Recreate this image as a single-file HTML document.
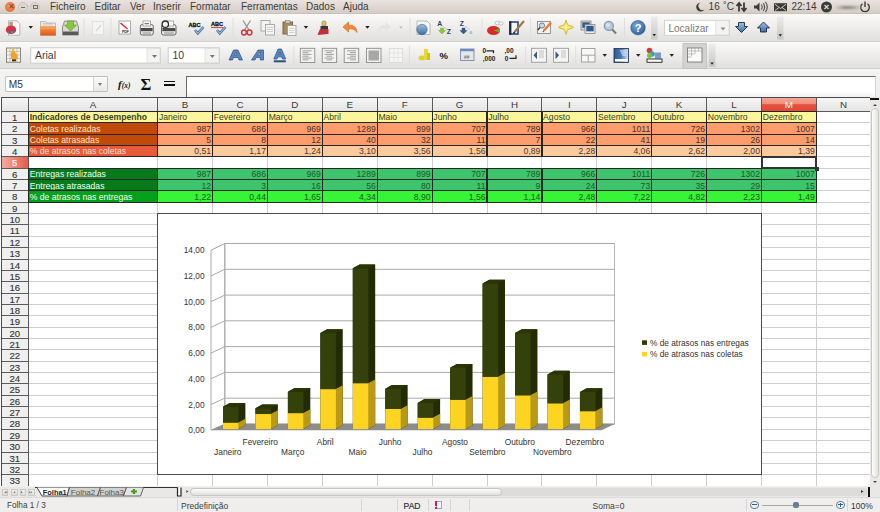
<!DOCTYPE html><html><head><meta charset="utf-8"><style>
*{margin:0;padding:0;box-sizing:border-box}
html,body{width:880px;height:512px;overflow:hidden;background:#f2f1f0;font-family:"Liberation Sans",sans-serif;position:relative}
.a{position:absolute}
.t{position:absolute;white-space:nowrap;line-height:1}
#menubar{left:0;top:0;width:880px;height:14px;background:linear-gradient(#e9e3e1,#e0d8d3 50%,#d5cdc4);border-bottom:1px solid #cbc3ba}
.mi{position:absolute;top:1px;font-size:10px;color:#3c3b37;line-height:12px}
.tb{left:0;width:880px;background:linear-gradient(#fafaf9,#eeedec 50%,#e0e0de);}
.sep{position:absolute;width:1px;background:#d4d3d0;border-right:1px solid #fafafa}
.ic{position:absolute}
.dd{position:absolute;width:0;height:0;border-left:2.5px solid transparent;border-right:2.5px solid transparent;border-top:3px solid #222}
.cell{position:absolute;overflow:hidden;white-space:nowrap;font-size:8.65px;line-height:12.6px}
.rh{position:absolute;left:1px;width:27.5px;text-align:center;font-size:9.6px;color:#333;line-height:11.5px;-webkit-text-stroke:0.12px #333}
.ch{position:absolute;top:98px;height:13.4px;text-align:center;font-size:9.8px;color:#3a3a3a;line-height:13.4px}
</style></head><body>

<div class="a" id="menubar"></div>
<div class="a" style="left:5px;top:1.5px;width:10px;height:10px;border-radius:50%;background:radial-gradient(circle at 50% 40%,#f49a66,#e0602a);"></div>
<div class="t" style="left:7.5px;top:2.5px;font-size:8px;color:#7a3a20">&#x2715;</div>
<div class="a" style="left:18px;top:2px;width:10px;height:10px;border-radius:50%;background:#dcd5d0;border:1px solid #cbc4bd"></div>
<div class="a" style="left:21px;top:6.5px;width:4px;height:1px;background:#706c66"></div>
<div class="a" style="left:30px;top:2px;width:10px;height:10px;border-radius:50%;background:#dcd5d0;border:1px solid #cbc4bd"></div>
<div class="a" style="left:32.5px;top:5px;width:5px;height:4px;border:1px solid #706c66"></div>
<div class="mi" style="left:50px">Ficheiro</div>
<div class="mi" style="left:94.5px">Editar</div>
<div class="mi" style="left:130px">Ver</div>
<div class="mi" style="left:153px">Inserir</div>
<div class="mi" style="left:190px">Formatar</div>
<div class="mi" style="left:241px">Ferramentas</div>
<div class="mi" style="left:306px">Dados</div>
<div class="mi" style="left:343px">Ajuda</div>
<svg class="a" style="left:690px;top:0" width="190" height="14"><path d="M10.5 2.5 A4.5 4.5 0 1 0 14.5 9.5 A3.8 3.8 0 0 1 10.5 2.5 Z" fill="#3c3b37"/><path d="M49 11.5 V3.5 M46.5 6 L49 3 L51.5 6 M54 2.5 V10.5 M51.5 8 L54 11 L56.5 8" fill="none" stroke="#3c3b37" stroke-width="1.8"/><path d="M64 5.5 h2.5 l3 -3 v9 l-3 -3 h-2.5 z" fill="#3c3b37"/><path d="M71.5 4.5 Q73 7 71.5 9.5 M73.5 3 Q76 7 73.5 11 M75.5 1.8 Q79 7 75.5 12.2" fill="none" stroke="#3c3b37" stroke-width="1"/><rect x="84" y="3.2" width="13" height="8" fill="#3c3b37"/><path d="M85 4.2 L90.5 8.5 L96 4.2 M85 10.5 L89 7.5 M96 10.5 L92 7.5" fill="none" stroke="#dcd8d0" stroke-width="0.9"/><circle cx="136.5" cy="7" r="5.5" fill="#3c3b37"/><path d="M134.5 5 L138.5 9 M138.5 5 L134.5 9" stroke="#dcd8d0" stroke-width="1.3"/><path d="M177.5 3.8 A4.3 4.3 0 1 1 172.5 3.8" fill="none" stroke="#3c3b37" stroke-width="1.4"/><path d="M175 1.5 V7" stroke="#3c3b37" stroke-width="1.4"/></svg>
<div class="mi" style="left:708.4px;letter-spacing:0.3px">16 &#x02DA;C</div>
<div class="mi" style="left:791.5px">22:14</div>
<div class="a" style="left:836px;top:5.5px;width:24px;height:3px;background:linear-gradient(90deg,#cfcbc3,#85817b 40%,#9a968f 70%,#cfcbc3);filter:blur(0.8px)"></div>
<div class="a tb" style="top:14px;height:28px;border-bottom:1px solid #d2d1ce"></div>
<div class="a tb" style="top:42px;height:27px;border-bottom:1px solid #cfcecb"></div>
<div class="a" style="left:0;top:69px;width:880px;height:28px;background:linear-gradient(#f3f3f2,#eeeeed)"></div>
<svg class="a" style="left:0;top:0" width="880" height="100">
<defs>
<linearGradient id="gOr" x1="0" y1="0" x2="0" y2="1"><stop offset="0" stop-color="#f7a04a"/><stop offset="1" stop-color="#e0541a"/></linearGradient>
<linearGradient id="gBl" x1="0" y1="0" x2="0" y2="1"><stop offset="0" stop-color="#9fc0e0"/><stop offset="1" stop-color="#3c6fa6"/></linearGradient>
<linearGradient id="gChev" x1="0" y1="0" x2="0" y2="1"><stop offset="0" stop-color="#ececea"/><stop offset="1" stop-color="#c6c6c4"/></linearGradient>
<radialGradient id="gHelp" cx="0.4" cy="0.35" r="0.7"><stop offset="0" stop-color="#78a8d8"/><stop offset="1" stop-color="#2c5f98"/></radialGradient>
</defs>
<!-- ===== toolbar 1 ===== -->
<!-- new doc -->
<path d="M8.5 20.8 H17 L19.8 23.6 V35.2 H8.5 Z" fill="#fbfbfb" stroke="#a8a8a6" stroke-width="0.8"/>
<rect x="9.3" y="21.8" width="3.6" height="4" fill="#b89a8a"/>
<ellipse cx="11" cy="29.8" rx="5.2" ry="4.3" fill="#d8323a"/>
<path d="M7 31.5 Q11 35.5 15.8 31 Q13 30 11.5 31.5 Q9 30 7 31.5 Z" fill="#6a5aa8"/>
<path d="M10.5 32 Q12 30.5 13.5 32 L12 33.5 Z" fill="#5aa05a"/>
<path d="M28.5 26 h4.5 l-2.25 2.8 z" fill="#222"/>
<!-- open folder -->
<path d="M40.5 21.5 h5 l1.5 1.5 h8.5 v12.3 h-15 z" fill="#ecebe8" stroke="#a9a69f" stroke-width="0.7"/>
<path d="M42.5 23.5 h10 M42.5 25 h10" stroke="#b8b6b0" stroke-width="0.6"/>
<path d="M40.3 26.2 h15.5 v9.3 h-15.5 z" fill="url(#gOr)"/>
<path d="M41 28.3 h14" stroke="#fbb070" stroke-width="0.8"/>
<!-- save -->
<path d="M62.5 27 L64.5 21 H76.5 L78.5 27 V35 H62.5 Z" fill="#d8d8d6" stroke="#7a7a78" stroke-width="0.8"/>
<rect x="63" y="31.5" width="15" height="3.5" fill="#5a5a58"/>
<path d="M67.5 21 h6 v4 h3 l-6 6 l-6 -6 h3 z" fill="#8cc63a" stroke="#5c9a1a" stroke-width="0.6"/>
<line x1="84" y1="18" x2="84" y2="38" stroke="#dfdedb" stroke-width="1"/>
<!-- disabled edit -->
<rect x="92.5" y="21.5" width="11" height="13" fill="#f5f5f4" stroke="#dcdcda" stroke-width="0.8"/>
<line x1="96" y1="31" x2="101" y2="25" stroke="#d8d8d6" stroke-width="1.2"/>
<line x1="111" y1="18" x2="111" y2="38" stroke="#dfdedb" stroke-width="1"/>
<!-- pdf -->
<rect x="119" y="21" width="11.5" height="13" fill="#fdfdfd" stroke="#9a9a98" stroke-width="0.8"/>
<path d="M120.5 23 L127.5 29" stroke="#d4303a" stroke-width="1.6"/>
<text x="122" y="33" font-family="Liberation Sans" font-size="3.5" font-weight="bold" fill="#222">PDF</text>
<!-- printer -->
<rect x="140.3" y="24.5" width="13" height="10.5" rx="2" fill="#ececea" stroke="#5a5a58" stroke-width="0.9"/>
<rect x="143" y="21" width="7.5" height="5" fill="#fff" stroke="#8a8a88" stroke-width="0.7"/>
<rect x="144.5" y="23" width="4.5" height="1.3" fill="#7a7a78"/>
<rect x="141" y="28" width="11.5" height="3.2" fill="#4a4a48"/>
<rect x="142.5" y="32.5" width="8.5" height="1" fill="#8a8a88"/>
<!-- print preview -->
<rect x="161.5" y="24.5" width="14.5" height="10.5" rx="2" fill="#ececea" stroke="#5a5a58" stroke-width="0.9"/>
<rect x="166" y="21" width="7.5" height="5" fill="#fff" stroke="#8a8a88" stroke-width="0.7"/>
<rect x="162.3" y="28" width="13" height="3.2" fill="#4a4a48"/>
<rect x="164" y="32.5" width="10" height="1" fill="#8a8a88"/>
<circle cx="165.3" cy="24.2" r="3.2" fill="#f4f4f4" stroke="#2a2a28" stroke-width="1.3"/>
<!-- spell -->
<text x="188.6" y="26.5" font-family="Liberation Sans" font-size="5.6" font-weight="bold" fill="#111" textLength="12" stroke="#111" stroke-width="0.3">ABC</text>
<path d="M195 30 L197.8 33.3 L203.5 27" fill="none" stroke="#3a5a88" stroke-width="2.6"/>
<path d="M195 30 L197.8 33.3 L203.5 27" fill="none" stroke="#9ab8dc" stroke-width="1.2"/>
<text x="211" y="25.8" font-family="Liberation Sans" font-size="5.6" font-weight="bold" fill="#111" textLength="12" stroke="#111" stroke-width="0.3">ABC</text>
<line x1="211" y1="27.6" x2="223" y2="27.6" stroke="#d43a3a" stroke-width="1"/>
<path d="M217 30 L219.8 33.3 L225.5 27" fill="none" stroke="#3a5a88" stroke-width="2.6"/>
<path d="M217 30 L219.8 33.3 L225.5 27" fill="none" stroke="#9ab8dc" stroke-width="1.2"/>
<line x1="233" y1="18" x2="233" y2="38" stroke="#dfdedb" stroke-width="1"/>
<!-- scissors -->
<path d="M243 20.5 L249 30 M250.5 20.5 L244.5 30" stroke="#9a9a98" stroke-width="1.4"/>
<circle cx="244" cy="32.5" r="2.4" fill="none" stroke="#d2383c" stroke-width="1.5"/>
<circle cx="249.5" cy="32.5" r="2.4" fill="none" stroke="#d2383c" stroke-width="1.5"/>
<!-- copy -->
<rect x="261" y="20.5" width="9" height="10.5" fill="#f4f4f3" stroke="#9a9a98" stroke-width="0.8"/>
<rect x="265.5" y="24.5" width="9" height="10.5" fill="#f4f4f3" stroke="#9a9a98" stroke-width="0.8"/>
<path d="M267 27.5 h6 M267 29.5 h6 M267 31.5 h6" stroke="#b8b8b6" stroke-width="0.6"/>
<!-- paste -->
<rect x="283" y="22" width="9.5" height="12" fill="#a68a60" stroke="#7a6440"/>
<rect x="285.5" y="20.5" width="4.5" height="2.5" fill="#d8d2c4" stroke="#777" stroke-width="0.5"/>
<rect x="287.5" y="25.5" width="8.5" height="10" fill="#f8f8f7" stroke="#9a9a98" stroke-width="0.8"/>
<path d="M289 28.5 h5.5 M289 30.5 h5.5 M289 32.5 h5.5" stroke="#b8b8b6" stroke-width="0.6"/>
<path d="M303.7 26 h4.5 l-2.25 2.8 z" fill="#222"/>
<!-- clone brush -->
<rect x="322" y="21" width="4" height="5" rx="1.5" fill="#d8c070" stroke="#8a7a40" stroke-width="0.6"/>
<rect x="320.5" y="26" width="7.5" height="3" fill="#3a3a3a"/>
<path d="M320 29 h8.5 v5 l-11 1 z" fill="#c0303a"/>
<!-- undo -->
<path d="M343 27 L348.5 22 V25 Q357 25 357 32.5 Q354 28 348.5 29 V32 Z" fill="#f08a3a" stroke="#d06a20" stroke-width="0.6"/>
<path d="M365.2 26 h4.5 l-2.25 2.8 z" fill="#222"/>
<!-- redo disabled -->
<path d="M391 27 L385.5 22 V25 Q377 25 377 32.5 Q380 28 385.5 29 V32 Z" fill="#e4e4e2"/>
<path d="M399.2 26.5 h3.5 l-1.75 2.2 z" fill="#b8b8b6"/>
<line x1="410" y1="18" x2="410" y2="38" stroke="#dfdedb" stroke-width="1"/>
<!-- hyperlink -->
<path d="M417 21 h10 l3 3 v10.5 h-13 z" fill="#f8f8f7" stroke="#a9a9a7" stroke-width="0.8"/>
<circle cx="422" cy="29.5" r="5.2" fill="url(#gBl)" stroke="#3a5f8a" stroke-width="0.6"/>
<!-- sort asc -->
<text x="437.3" y="26.3" font-family="Liberation Sans" font-size="6.8" font-weight="bold" fill="#2a3e66">A</text>
<path d="M440.5 28 h3 v2.5 h2 l-3.5 3.5 l-3.5 -3.5 h2 z" fill="#8ac83a" stroke="#6aa02a" stroke-width="0.4"/>
<text x="446.8" y="34" font-family="Liberation Sans" font-size="6.8" font-weight="bold" fill="#2a3e66">Z</text>
<line x1="442.5" y1="26" x2="447" y2="29.5" stroke="#8aa0b8" stroke-width="0.5"/>
<!-- sort desc -->
<text x="459.8" y="26.3" font-family="Liberation Sans" font-size="6.8" font-weight="bold" fill="#2a3e66">Z</text>
<path d="M462 28 h3 v2.5 h2 l-3.5 3.5 l-3.5 -3.5 h2 z" fill="#3a5a8a" stroke="#2a3e66" stroke-width="0.4"/>
<text x="469" y="34" font-family="Liberation Sans" font-size="6" fill="#a0a8b0">a</text>
<line x1="465" y1="26" x2="469.5" y2="29.5" stroke="#8aa0b8" stroke-width="0.5"/>
<line x1="482" y1="18" x2="482" y2="38" stroke="#e2e1de" stroke-width="1"/>
<!-- chart -->
<ellipse cx="493.5" cy="30.5" rx="6.5" ry="4.5" fill="#d82a2a"/>
<path d="M493.5 30.5 L500 28.5 L499.5 32.5 Z" fill="#6ab02a"/>
<ellipse cx="497.5" cy="23" rx="2.5" ry="1.8" fill="#f4f4f4" stroke="#b0a0a8" stroke-width="0.6"/>
<ellipse cx="501" cy="23.5" rx="2.2" ry="1.6" fill="#f4f4f4" stroke="#b0a0a8" stroke-width="0.6"/>
<!-- draw -->
<rect x="510" y="22" width="8" height="12" fill="#f6f8fb" stroke="#2a4a7a" stroke-width="1.6"/>
<rect x="509.2" y="21.2" width="2.2" height="13.6" fill="#1a2a4a"/>
<path d="M524 21 L514.5 32" stroke="#a07848" stroke-width="2.2"/>
<path d="M514.5 32 L513.5 33.5" stroke="#222" stroke-width="1.5"/>
<line x1="530.5" y1="18" x2="530.5" y2="38" stroke="#e2e1de" stroke-width="1"/>
<!-- navigator -->
<rect x="537.5" y="21.5" width="13" height="12" fill="#f2f2f0" stroke="#8a8a88" stroke-width="0.9"/>
<circle cx="542" cy="25.5" r="2.6" fill="#c8dcf0" stroke="#4a6a8a" stroke-width="0.8"/>
<path d="M540 27.5 L537.8 30" stroke="#333" stroke-width="1.3"/>
<path d="M551 22.5 L544 30.5" stroke="#f07a28" stroke-width="2.4"/>
<path d="M544 30.5 L543 32" stroke="#555" stroke-width="1.3"/>
<!-- gallery star -->
<path d="M566 20 Q567 25.5 569 25.5 Q571 25.5 573.5 27.2 Q571 29 569 29 Q567 29 566 34.5 Q565 29 563 29 Q561 29 558.5 27.2 Q561 25.5 563 25.5 Q565 25.5 566 20 Z" fill="#f2e468" stroke="#cbb428" stroke-width="0.9"/>
<path d="M562 27.2 h8 M566 23.5 v7.5" stroke="#fff8b0" stroke-width="0.8"/>
<!-- data sources -->
<rect x="581" y="21" width="10" height="9" fill="#d4d8dc" stroke="#7a7a7a" stroke-width="0.7"/>
<rect x="582.3" y="22.3" width="7.4" height="5.5" fill="#3a5a80"/>
<rect x="585" y="24.5" width="10" height="9" fill="#e8eaec" stroke="#7a7a7a" stroke-width="0.7"/>
<rect x="586.3" y="25.8" width="7.4" height="5.5" fill="#2a5a90"/>
<!-- zoom -->
<circle cx="608.8" cy="25.9" r="4.5" fill="#b8cce0" stroke="#8898a8" stroke-width="1.3"/>
<circle cx="608" cy="25" r="1.8" fill="#dde8f2"/>
<line x1="612" y1="29.3" x2="616" y2="33.5" stroke="#7a7a78" stroke-width="2"/>
<line x1="624.5" y1="18" x2="624.5" y2="38" stroke="#dfdedb" stroke-width="1"/>
<!-- help -->
<circle cx="638" cy="27.7" r="7.3" fill="url(#gHelp)" stroke="#2a5080" stroke-width="0.5"/>
<text x="638" y="32" text-anchor="middle" font-family="Liberation Sans" font-size="11" font-weight="bold" fill="#fff">?</text>
<!-- chevron -->
<rect x="651" y="16.5" width="6.5" height="23" fill="url(#gChev)"/>
<path d="M652.5 34 h3.5 l-1.75 2.2 z" fill="#222"/>
<!-- localizar -->
<rect x="664.5" y="20.3" width="65" height="15" fill="#fff" stroke="#cfcecb" stroke-width="0.9"/>
<rect x="715.5" y="20.8" width="13.5" height="14" fill="#f3f3f2" stroke="#dcdcda" stroke-width="0.6"/>
<path d="M720.5 27.5 h5 l-2.5 3 z" fill="#8a8a88"/>
<text x="668.5" y="31.5" font-family="Liberation Sans" font-size="10" fill="#777">Localizar</text>
<!-- find down/up -->
<path d="M738.5 22.5 h6 v4 h3 l-6 6 l-6 -6 h3 z" fill="url(#gBl)" stroke="#1a2a40" stroke-width="0.9"/>
<path d="M760.5 32 h6 v-4 h3 l-6 -6 l-6 6 h3 z" fill="url(#gBl)" stroke="#1a2a40" stroke-width="0.9"/>
<rect x="777" y="16.5" width="6.5" height="23" fill="url(#gChev)"/>
<path d="M778.5 34.3 h3.5 l-1.75 2.2 z" fill="#222"/>

<!-- ===== toolbar 2 ===== -->
<rect x="6.5" y="48" width="14" height="14.3" fill="#f6f4ec" stroke="#7a7a72" stroke-width="0.9"/>
<path d="M6.5 51.5 h14 M6.5 55 h14 M6.5 58.5 h14 M10 48 v14.3 M13.5 48 v14.3 M17 48 v14.3" stroke="#aaa89a" stroke-width="0.6"/>
<path d="M11 54 Q11 50.5 13 49.5 Q15 50.5 15.5 53 Q18 54.5 17.5 58 Q16 61 13.5 60.5 Q10.5 60 11 54 Z" fill="#f2a030"/>
<rect x="12.2" y="48.3" width="1.8" height="4" fill="#e8c020"/>
<rect x="12" y="59.5" width="4" height="1.8" fill="#3a2a1a"/>
<!-- font name -->
<rect x="30.8" y="47.8" width="129.5" height="15.3" fill="#fff" stroke="#c8c7c3" stroke-width="0.9"/>
<rect x="147" y="48.3" width="13" height="14.3" fill="#f3f3f2" stroke="#d8d8d6" stroke-width="0.6"/>
<path d="M152 55 h5 l-2.5 3 z" fill="#777"/>
<text x="35" y="59.3" font-family="Liberation Sans" font-size="10.5" fill="#3a3a3a">Arial</text>
<!-- size -->
<rect x="168.2" y="47.8" width="51" height="15.3" fill="#fff" stroke="#c8c7c3" stroke-width="0.9"/>
<rect x="205" y="48.3" width="13.8" height="14.3" fill="#f3f3f2" stroke="#d8d8d6" stroke-width="0.6"/>
<path d="M209.8 55 h5 l-2.5 3 z" fill="#777"/>
<text x="172.5" y="59.3" font-family="Liberation Sans" font-size="10.5" fill="#3a3a3a">10</text>
<!-- bold/italic/underline A -->
<path d="M229 60 L233.5 50 H238 L242.5 60 H239 L238 57.5 H233.5 L232.5 60 Z M234.5 55 H237 L235.8 52 Z" fill="#5a86c0" stroke="#2c4f80" stroke-width="0.7" fill-rule="evenodd"/>
<path d="M251.5 60 L258 50 H263.5 L263.5 60 H260.3 L260.2 57.5 H256.3 L255 60 Z M257.5 55 H260.2 L260.3 52 Z" fill="#5a86c0" stroke="#2c4f80" stroke-width="0.7" fill-rule="evenodd"/>
<path d="M273.8 59 L278 49 H281.5 L285.7 59 H282.5 L281.6 56.8 H277.9 L277 59 Z M278.8 54.5 H280.7 L279.8 52 Z" fill="#5a86c0" stroke="#2c4f80" stroke-width="0.7" fill-rule="evenodd"/>
<rect x="273.8" y="60.3" width="12" height="2" fill="#2c4f80"/>
<line x1="293.8" y1="46" x2="293.8" y2="66" stroke="#dfdedb" stroke-width="1"/>
<!-- align -->
<g fill="#f2f2f1" stroke="#8a8a88" stroke-width="0.9">
<rect x="300.3" y="48.3" width="14.5" height="14.2"/>
<rect x="322.2" y="48.3" width="14.5" height="14.2"/>
<rect x="344.2" y="48.3" width="14.5" height="14.2"/>
<rect x="366.5" y="48.3" width="14.5" height="14.2"/>
</g>
<path d="M302.5 50.8 h9 M302.5 52.6 h6 M302.5 54.4 h9 M302.5 56.2 h6 M302.5 58 h9 M302.5 59.8 h6" stroke="#9a9a98" stroke-width="0.9"/>
<path d="M324.5 50.8 h9.5 M326.5 52.6 h5.5 M324.5 54.4 h9.5 M326.5 56.2 h5.5 M324.5 58 h9.5 M326.5 59.8 h5.5" stroke="#9a9a98" stroke-width="0.9"/>
<path d="M347 50.8 h9 M350 52.6 h6 M347 54.4 h9 M350 56.2 h6 M347 58 h9 M350 59.8 h6" stroke="#9a9a98" stroke-width="0.9"/>
<rect x="368.5" y="50.5" width="10.5" height="10" fill="#a8a8a6"/>
<rect x="389.5" y="48.5" width="13" height="13.8" fill="#f6f6f5" stroke="#d8d8d6" stroke-width="0.8"/>
<path d="M389.5 53 h13 M389.5 57.5 h13 M394 48.5 v13.8 M398 48.5 v13.8" stroke="#dcdcda" stroke-width="0.6"/>
<line x1="409.4" y1="46" x2="409.4" y2="66" stroke="#dfdedb" stroke-width="1"/>
<!-- currency -->
<ellipse cx="422" cy="58" rx="3.5" ry="2.5" fill="#d8d040"/>
<rect x="424" y="49" width="4" height="11" fill="#e8d830"/>
<rect x="427" y="53" width="3" height="7" fill="#d0c020"/>
<text x="439.5" y="58.5" font-family="Liberation Sans" font-size="9.5" font-weight="bold" fill="#111">%</text>
<!-- number format -->
<rect x="460.5" y="49" width="13.5" height="11.5" fill="#e4e6ea" stroke="#7a8aaa" stroke-width="0.9"/>
<rect x="460.5" y="49" width="13.5" height="2.2" fill="#6a8ac0"/>
<text x="464" y="58.5" font-family="Liberation Sans" font-size="5" font-weight="bold" fill="#777">##</text>
<text x="482.5" y="53" font-family="Liberation Sans" font-size="6.5" font-weight="bold" fill="#222">0</text>
<path d="M486.5 50.8 h7 v2.5" stroke="#222" stroke-width="1.2" fill="none"/>
<text x="482.8" y="60.5" font-family="Liberation Sans" font-size="6.5" font-weight="bold" fill="#222">,000</text>
<text x="504.5" y="53" font-family="Liberation Sans" font-size="6.5" font-weight="bold" fill="#222">,00</text>
<text x="504.8" y="60.5" font-family="Liberation Sans" font-size="6.5" font-weight="bold" fill="#222">0</text>
<path d="M509.5 58.3 h6.5 v-3" stroke="#222" stroke-width="1.2" fill="none"/>
<line x1="525.6" y1="46" x2="525.6" y2="66" stroke="#dfdedb" stroke-width="1"/>
<!-- indent -->
<rect x="531.5" y="48.3" width="15" height="14" fill="#f4f4f3" stroke="#9a9a98" stroke-width="0.9"/>
<path d="M533.5 55.3 l3.5 -4 v8 z" fill="#3a5a8a"/>
<path d="M539 51 h5 M539 53 h5 M539 55 h5 M539 57 h5" stroke="#b8b8b6" stroke-width="0.8"/>
<rect x="553.5" y="48.3" width="15" height="14" fill="#f4f4f3" stroke="#9a9a98" stroke-width="0.9"/>
<path d="M555.5 51.3 l3.5 4 l-3.5 4 z" fill="#3a5a8a"/>
<path d="M561 51 h5 M561 53 h5 M561 55 h5 M561 57 h5" stroke="#b8b8b6" stroke-width="0.8"/>
<line x1="575.6" y1="46" x2="575.6" y2="66" stroke="#dfdedb" stroke-width="1"/>
<!-- borders -->
<rect x="581.5" y="48.5" width="13.5" height="13.5" fill="#f8f8f7" stroke="#9a9a98" stroke-width="0.9"/>
<path d="M581.5 55.2 h13.5 M588.2 55.2 v6.8" stroke="#9a9a98" stroke-width="0.9"/>
<path d="M602.5 54 h4.5 l-2.25 2.8 z" fill="#222"/>
<defs><linearGradient id="gBs" x1="0" y1="0" x2="1" y2="0"><stop offset="0" stop-color="#2a5a98"/><stop offset="0.5" stop-color="#4a7ab8"/><stop offset="1" stop-color="#dde6f2"/></linearGradient></defs><rect x="614" y="48.5" width="14.5" height="14" fill="url(#gBs)" stroke="#2a3a50" stroke-width="0.9"/>
<rect x="615" y="59" width="12.5" height="2.5" fill="#fff"/>
<path d="M620 51 h6 M621 53 h5 M622 55 h4" stroke="#e8eef6" stroke-width="1"/>
<path d="M636 54 h4.5 l-2.25 2.8 z" fill="#222"/>
<!-- bg color -->
<circle cx="649.5" cy="50.5" r="2.8" fill="#d83a3a"/>
<circle cx="652" cy="54" r="2.8" fill="#3aa0b0"/>
<circle cx="649.5" cy="55.5" r="2.5" fill="#7ac03a"/>
<rect x="655" y="52.5" width="6" height="6" fill="#7a9ac8"/>
<rect x="647" y="59" width="15" height="3.3" fill="#fff" stroke="#222" stroke-width="0.9"/>
<path d="M669.5 54 h4.5 l-2.25 2.8 z" fill="#222"/>
<!-- pressed grid button -->
<rect x="683" y="43.3" width="23.3" height="25" fill="#d2d2d0" stroke="#bdbdbb" stroke-width="0.8"/>
<rect x="687.5" y="48" width="14.5" height="14" fill="#fbfbfb" stroke="#7a7a78" stroke-width="0.9"/>
<path d="M687.5 51 h14.5 M687.5 54 h7 M687.5 57 h4 M691.5 48 v8 M695 48 v6 M698.5 48 v3" stroke="#9a9a98" stroke-width="0.6"/>
<rect x="708.7" y="43.9" width="6.8" height="23" fill="url(#gChev)"/>
<path d="M710.3 62.5 h3.5 l-1.75 2.2 z" fill="#222"/>
</svg>

<div class="a" style="left:5px;top:76px;width:103px;height:16px;background:#fff;border:1px solid #c2c1bd;border-radius:1px"></div>
<div class="a" style="left:93px;top:77px;width:14px;height:14px;background:linear-gradient(#fafafa,#e9e9e7);border-left:1px solid #d6d5d2"></div>
<div class="dd" style="left:97.5px;top:83px;border-top-color:#777"></div>
<div class="t" style="left:8.8px;top:79.5px;font-size:10.2px;color:#333">M5</div>
<div class="t" style="left:118px;top:78.5px;font-size:11px;font-style:italic;font-family:'Liberation Serif',serif;color:#111;font-weight:bold">f<span style="font-size:7.5px">(x)</span></div>
<div class="t" style="left:140.5px;top:76.5px;font-size:16.5px;font-family:'Liberation Serif',serif;color:#111;font-weight:bold">&#x3A3;</div>
<div class="a" style="left:164px;top:80.5px;width:11px;height:1.8px;background:#111"></div><div class="a" style="left:164px;top:84.2px;width:11px;height:1.8px;background:#111"></div>
<div class="a" style="left:186px;top:76.2px;width:690px;height:21px;background:linear-gradient(#fff 70%,#f2f2f2);border-top:1.8px solid #6a6a68;border-left:1.8px solid #6a6a68;border-right:1px solid #d5d4d0"></div>
<div class="a" style="left:0;top:97.5px;width:871px;height:388.5px;background:#fff"></div>
<div class="a" style="left:1px;top:97.5px;width:870px;height:13.900000000000006px;background:linear-gradient(#f6f6f6,#e4e4e4)"></div>
<div class="a" style="left:1px;top:111.4px;width:27.5px;height:374.6px;background:#efefef"></div>
<div class="a" style="left:28.5px;top:110.90px;width:842px;height:1px;background:#cfcfcf"></div><div class="a" style="left:1px;top:110.90px;width:27.5px;height:1px;background:#5a5a5a"></div><div class="a" style="left:28.5px;top:122.26px;width:842px;height:1px;background:#cfcfcf"></div><div class="a" style="left:1px;top:122.26px;width:27.5px;height:1px;background:#5a5a5a"></div><div class="a" style="left:28.5px;top:133.61px;width:842px;height:1px;background:#cfcfcf"></div><div class="a" style="left:1px;top:133.61px;width:27.5px;height:1px;background:#5a5a5a"></div><div class="a" style="left:28.5px;top:144.97px;width:842px;height:1px;background:#cfcfcf"></div><div class="a" style="left:1px;top:144.97px;width:27.5px;height:1px;background:#5a5a5a"></div><div class="a" style="left:28.5px;top:156.32px;width:842px;height:1px;background:#cfcfcf"></div><div class="a" style="left:1px;top:156.32px;width:27.5px;height:1px;background:#5a5a5a"></div><div class="a" style="left:28.5px;top:167.68px;width:842px;height:1px;background:#cfcfcf"></div><div class="a" style="left:1px;top:167.68px;width:27.5px;height:1px;background:#5a5a5a"></div><div class="a" style="left:28.5px;top:179.03px;width:842px;height:1px;background:#cfcfcf"></div><div class="a" style="left:1px;top:179.03px;width:27.5px;height:1px;background:#5a5a5a"></div><div class="a" style="left:28.5px;top:190.38px;width:842px;height:1px;background:#cfcfcf"></div><div class="a" style="left:1px;top:190.38px;width:27.5px;height:1px;background:#5a5a5a"></div><div class="a" style="left:28.5px;top:201.74px;width:842px;height:1px;background:#cfcfcf"></div><div class="a" style="left:1px;top:201.74px;width:27.5px;height:1px;background:#5a5a5a"></div><div class="a" style="left:28.5px;top:213.10px;width:842px;height:1px;background:#cfcfcf"></div><div class="a" style="left:1px;top:213.10px;width:27.5px;height:1px;background:#5a5a5a"></div><div class="a" style="left:28.5px;top:224.45px;width:842px;height:1px;background:#cfcfcf"></div><div class="a" style="left:1px;top:224.45px;width:27.5px;height:1px;background:#5a5a5a"></div><div class="a" style="left:28.5px;top:235.81px;width:842px;height:1px;background:#cfcfcf"></div><div class="a" style="left:1px;top:235.81px;width:27.5px;height:1px;background:#5a5a5a"></div><div class="a" style="left:28.5px;top:247.16px;width:842px;height:1px;background:#cfcfcf"></div><div class="a" style="left:1px;top:247.16px;width:27.5px;height:1px;background:#5a5a5a"></div><div class="a" style="left:28.5px;top:258.51px;width:842px;height:1px;background:#cfcfcf"></div><div class="a" style="left:1px;top:258.51px;width:27.5px;height:1px;background:#5a5a5a"></div><div class="a" style="left:28.5px;top:269.87px;width:842px;height:1px;background:#cfcfcf"></div><div class="a" style="left:1px;top:269.87px;width:27.5px;height:1px;background:#5a5a5a"></div><div class="a" style="left:28.5px;top:281.23px;width:842px;height:1px;background:#cfcfcf"></div><div class="a" style="left:1px;top:281.23px;width:27.5px;height:1px;background:#5a5a5a"></div><div class="a" style="left:28.5px;top:292.58px;width:842px;height:1px;background:#cfcfcf"></div><div class="a" style="left:1px;top:292.58px;width:27.5px;height:1px;background:#5a5a5a"></div><div class="a" style="left:28.5px;top:303.94px;width:842px;height:1px;background:#cfcfcf"></div><div class="a" style="left:1px;top:303.94px;width:27.5px;height:1px;background:#5a5a5a"></div><div class="a" style="left:28.5px;top:315.29px;width:842px;height:1px;background:#cfcfcf"></div><div class="a" style="left:1px;top:315.29px;width:27.5px;height:1px;background:#5a5a5a"></div><div class="a" style="left:28.5px;top:326.64px;width:842px;height:1px;background:#cfcfcf"></div><div class="a" style="left:1px;top:326.64px;width:27.5px;height:1px;background:#5a5a5a"></div><div class="a" style="left:28.5px;top:338.00px;width:842px;height:1px;background:#cfcfcf"></div><div class="a" style="left:1px;top:338.00px;width:27.5px;height:1px;background:#5a5a5a"></div><div class="a" style="left:28.5px;top:349.36px;width:842px;height:1px;background:#cfcfcf"></div><div class="a" style="left:1px;top:349.36px;width:27.5px;height:1px;background:#5a5a5a"></div><div class="a" style="left:28.5px;top:360.71px;width:842px;height:1px;background:#cfcfcf"></div><div class="a" style="left:1px;top:360.71px;width:27.5px;height:1px;background:#5a5a5a"></div><div class="a" style="left:28.5px;top:372.07px;width:842px;height:1px;background:#cfcfcf"></div><div class="a" style="left:1px;top:372.07px;width:27.5px;height:1px;background:#5a5a5a"></div><div class="a" style="left:28.5px;top:383.42px;width:842px;height:1px;background:#cfcfcf"></div><div class="a" style="left:1px;top:383.42px;width:27.5px;height:1px;background:#5a5a5a"></div><div class="a" style="left:28.5px;top:394.77px;width:842px;height:1px;background:#cfcfcf"></div><div class="a" style="left:1px;top:394.77px;width:27.5px;height:1px;background:#5a5a5a"></div><div class="a" style="left:28.5px;top:406.13px;width:842px;height:1px;background:#cfcfcf"></div><div class="a" style="left:1px;top:406.13px;width:27.5px;height:1px;background:#5a5a5a"></div><div class="a" style="left:28.5px;top:417.49px;width:842px;height:1px;background:#cfcfcf"></div><div class="a" style="left:1px;top:417.49px;width:27.5px;height:1px;background:#5a5a5a"></div><div class="a" style="left:28.5px;top:428.84px;width:842px;height:1px;background:#cfcfcf"></div><div class="a" style="left:1px;top:428.84px;width:27.5px;height:1px;background:#5a5a5a"></div><div class="a" style="left:28.5px;top:440.20px;width:842px;height:1px;background:#cfcfcf"></div><div class="a" style="left:1px;top:440.20px;width:27.5px;height:1px;background:#5a5a5a"></div><div class="a" style="left:28.5px;top:451.55px;width:842px;height:1px;background:#cfcfcf"></div><div class="a" style="left:1px;top:451.55px;width:27.5px;height:1px;background:#5a5a5a"></div><div class="a" style="left:28.5px;top:462.90px;width:842px;height:1px;background:#cfcfcf"></div><div class="a" style="left:1px;top:462.90px;width:27.5px;height:1px;background:#5a5a5a"></div><div class="a" style="left:28.5px;top:474.26px;width:842px;height:1px;background:#cfcfcf"></div><div class="a" style="left:1px;top:474.26px;width:27.5px;height:1px;background:#5a5a5a"></div><div class="a" style="left:28.00px;top:111.4px;width:1px;height:374.6px;background:#cfcfcf"></div><div class="a" style="left:28.00px;top:97.5px;width:1px;height:13.900000000000006px;background:#5a5a5a"></div><div class="a" style="left:157.20px;top:111.4px;width:1px;height:374.6px;background:#cfcfcf"></div><div class="a" style="left:157.20px;top:97.5px;width:1px;height:13.900000000000006px;background:#5a5a5a"></div><div class="a" style="left:212.09px;top:111.4px;width:1px;height:374.6px;background:#cfcfcf"></div><div class="a" style="left:212.09px;top:97.5px;width:1px;height:13.900000000000006px;background:#5a5a5a"></div><div class="a" style="left:266.98px;top:111.4px;width:1px;height:374.6px;background:#cfcfcf"></div><div class="a" style="left:266.98px;top:97.5px;width:1px;height:13.900000000000006px;background:#5a5a5a"></div><div class="a" style="left:321.87px;top:111.4px;width:1px;height:374.6px;background:#cfcfcf"></div><div class="a" style="left:321.87px;top:97.5px;width:1px;height:13.900000000000006px;background:#5a5a5a"></div><div class="a" style="left:376.76px;top:111.4px;width:1px;height:374.6px;background:#cfcfcf"></div><div class="a" style="left:376.76px;top:97.5px;width:1px;height:13.900000000000006px;background:#5a5a5a"></div><div class="a" style="left:431.65px;top:111.4px;width:1px;height:374.6px;background:#cfcfcf"></div><div class="a" style="left:431.65px;top:97.5px;width:1px;height:13.900000000000006px;background:#5a5a5a"></div><div class="a" style="left:486.54px;top:111.4px;width:1px;height:374.6px;background:#cfcfcf"></div><div class="a" style="left:486.54px;top:97.5px;width:1px;height:13.900000000000006px;background:#5a5a5a"></div><div class="a" style="left:541.43px;top:111.4px;width:1px;height:374.6px;background:#cfcfcf"></div><div class="a" style="left:541.43px;top:97.5px;width:1px;height:13.900000000000006px;background:#5a5a5a"></div><div class="a" style="left:596.32px;top:111.4px;width:1px;height:374.6px;background:#cfcfcf"></div><div class="a" style="left:596.32px;top:97.5px;width:1px;height:13.900000000000006px;background:#5a5a5a"></div><div class="a" style="left:651.21px;top:111.4px;width:1px;height:374.6px;background:#cfcfcf"></div><div class="a" style="left:651.21px;top:97.5px;width:1px;height:13.900000000000006px;background:#5a5a5a"></div><div class="a" style="left:706.10px;top:111.4px;width:1px;height:374.6px;background:#cfcfcf"></div><div class="a" style="left:706.10px;top:97.5px;width:1px;height:13.900000000000006px;background:#5a5a5a"></div><div class="a" style="left:760.99px;top:111.4px;width:1px;height:374.6px;background:#cfcfcf"></div><div class="a" style="left:760.99px;top:97.5px;width:1px;height:13.900000000000006px;background:#5a5a5a"></div><div class="a" style="left:815.88px;top:111.4px;width:1px;height:374.6px;background:#cfcfcf"></div><div class="a" style="left:815.88px;top:97.5px;width:1px;height:13.900000000000006px;background:#5a5a5a"></div><div class="a" style="left:870.00px;top:111.4px;width:1px;height:374.6px;background:#cfcfcf"></div><div class="a" style="left:870.00px;top:97.5px;width:1px;height:13.900000000000006px;background:#5a5a5a"></div>
<div class="a" style="left:0.5px;top:97.0px;width:871px;height:1.2px;background:#4a4a4a"></div>
<div class="a" style="left:0.5px;top:97.5px;width:1.2px;height:388.5px;background:#4a4a4a"></div>
<div class="a" style="left:1px;top:110.7px;width:870px;height:1.2px;background:#5a5a5a"></div>
<div class="a" style="left:27.9px;top:97.5px;width:1.2px;height:388.5px;background:#5a5a5a"></div>
<div class="a" style="left:761.99px;top:98.2px;width:53.89px;height:12.50px;background:linear-gradient(#f5a698,#f0907e 42%,#e6503c 52%,#e04a36)"></div>
<div class="a" style="left:1.7px;top:157.32px;width:26.2px;height:10.36px;background:linear-gradient(90deg,#f4aca0,#e65a48)"></div>
<div class="ch" style="left:28.5px;width:129.20px;color:#3a3a3a">A</div>
<div class="ch" style="left:157.7px;width:54.89px;color:#3a3a3a">B</div>
<div class="ch" style="left:212.58999999999997px;width:54.89px;color:#3a3a3a">C</div>
<div class="ch" style="left:267.48px;width:54.89px;color:#3a3a3a">D</div>
<div class="ch" style="left:322.37px;width:54.89px;color:#3a3a3a">E</div>
<div class="ch" style="left:377.26px;width:54.89px;color:#3a3a3a">F</div>
<div class="ch" style="left:432.15px;width:54.89px;color:#3a3a3a">G</div>
<div class="ch" style="left:487.04px;width:54.89px;color:#3a3a3a">H</div>
<div class="ch" style="left:541.9300000000001px;width:54.89px;color:#3a3a3a">I</div>
<div class="ch" style="left:596.8199999999999px;width:54.89px;color:#3a3a3a">J</div>
<div class="ch" style="left:651.71px;width:54.89px;color:#3a3a3a">K</div>
<div class="ch" style="left:706.5999999999999px;width:54.89px;color:#3a3a3a">L</div>
<div class="ch" style="left:761.49px;width:54.89px;color:#fff">M</div>
<div class="ch" style="left:816.3800000000001px;width:54.12px;color:#3a3a3a">N</div>
<div class="rh" style="top:111.90px;color:#333;-webkit-text-stroke-color:#333">1</div>
<div class="rh" style="top:123.26px;color:#333;-webkit-text-stroke-color:#333">2</div>
<div class="rh" style="top:134.61px;color:#333;-webkit-text-stroke-color:#333">3</div>
<div class="rh" style="top:145.97px;color:#333;-webkit-text-stroke-color:#333">4</div>
<div class="rh" style="top:157.32px;color:#fff;-webkit-text-stroke-color:#fff">5</div>
<div class="rh" style="top:168.68px;color:#333;-webkit-text-stroke-color:#333">6</div>
<div class="rh" style="top:180.03px;color:#333;-webkit-text-stroke-color:#333">7</div>
<div class="rh" style="top:191.38px;color:#333;-webkit-text-stroke-color:#333">8</div>
<div class="rh" style="top:202.74px;color:#333;-webkit-text-stroke-color:#333">9</div>
<div class="rh" style="top:214.10px;color:#333;-webkit-text-stroke-color:#333">10</div>
<div class="rh" style="top:225.45px;color:#333;-webkit-text-stroke-color:#333">11</div>
<div class="rh" style="top:236.81px;color:#333;-webkit-text-stroke-color:#333">12</div>
<div class="rh" style="top:248.16px;color:#333;-webkit-text-stroke-color:#333">13</div>
<div class="rh" style="top:259.51px;color:#333;-webkit-text-stroke-color:#333">14</div>
<div class="rh" style="top:270.87px;color:#333;-webkit-text-stroke-color:#333">15</div>
<div class="rh" style="top:282.23px;color:#333;-webkit-text-stroke-color:#333">16</div>
<div class="rh" style="top:293.58px;color:#333;-webkit-text-stroke-color:#333">17</div>
<div class="rh" style="top:304.94px;color:#333;-webkit-text-stroke-color:#333">18</div>
<div class="rh" style="top:316.29px;color:#333;-webkit-text-stroke-color:#333">19</div>
<div class="rh" style="top:327.64px;color:#333;-webkit-text-stroke-color:#333">20</div>
<div class="rh" style="top:339.00px;color:#333;-webkit-text-stroke-color:#333">21</div>
<div class="rh" style="top:350.36px;color:#333;-webkit-text-stroke-color:#333">22</div>
<div class="rh" style="top:361.71px;color:#333;-webkit-text-stroke-color:#333">23</div>
<div class="rh" style="top:373.07px;color:#333;-webkit-text-stroke-color:#333">24</div>
<div class="rh" style="top:384.42px;color:#333;-webkit-text-stroke-color:#333">25</div>
<div class="rh" style="top:395.77px;color:#333;-webkit-text-stroke-color:#333">26</div>
<div class="rh" style="top:407.13px;color:#333;-webkit-text-stroke-color:#333">27</div>
<div class="rh" style="top:418.49px;color:#333;-webkit-text-stroke-color:#333">28</div>
<div class="rh" style="top:429.84px;color:#333;-webkit-text-stroke-color:#333">29</div>
<div class="rh" style="top:441.20px;color:#333;-webkit-text-stroke-color:#333">30</div>
<div class="rh" style="top:452.55px;color:#333;-webkit-text-stroke-color:#333">31</div>
<div class="rh" style="top:463.90px;color:#333;-webkit-text-stroke-color:#333">32</div>
<div class="rh" style="top:475.26px;color:#333;-webkit-text-stroke-color:#333">33</div>
<div class="cell" style="left:28.50px;top:111.40px;width:129.20px;height:11.36px;background:#fbf59c;color:#3c4418;padding-left:1.2px;font-weight:bold;">Indicadores de Desempenho</div><div class="cell" style="left:157.70px;top:111.40px;width:54.89px;height:11.36px;background:#fbf59c;color:#3c4418;text-align:left;padding-left:1.2px">Janeiro</div><div class="cell" style="left:212.59px;top:111.40px;width:54.89px;height:11.36px;background:#fbf59c;color:#3c4418;text-align:left;padding-left:1.2px">Fevereiro</div><div class="cell" style="left:267.48px;top:111.40px;width:54.89px;height:11.36px;background:#fbf59c;color:#3c4418;text-align:left;padding-left:1.2px">Março</div><div class="cell" style="left:322.37px;top:111.40px;width:54.89px;height:11.36px;background:#fbf59c;color:#3c4418;text-align:left;padding-left:1.2px">Abril</div><div class="cell" style="left:377.26px;top:111.40px;width:54.89px;height:11.36px;background:#fbf59c;color:#3c4418;text-align:left;padding-left:1.2px">Maio</div><div class="cell" style="left:432.15px;top:111.40px;width:54.89px;height:11.36px;background:#fbf59c;color:#3c4418;text-align:left;padding-left:1.2px">Junho</div><div class="cell" style="left:487.04px;top:111.40px;width:54.89px;height:11.36px;background:#fbf59c;color:#3c4418;text-align:left;padding-left:1.2px">Julho</div><div class="cell" style="left:541.93px;top:111.40px;width:54.89px;height:11.36px;background:#fbf59c;color:#3c4418;text-align:left;padding-left:1.2px">Agosto</div><div class="cell" style="left:596.82px;top:111.40px;width:54.89px;height:11.36px;background:#fbf59c;color:#3c4418;text-align:left;padding-left:1.2px">Setembro</div><div class="cell" style="left:651.71px;top:111.40px;width:54.89px;height:11.36px;background:#fbf59c;color:#3c4418;text-align:left;padding-left:1.2px">Outubro</div><div class="cell" style="left:706.60px;top:111.40px;width:54.89px;height:11.36px;background:#fbf59c;color:#3c4418;text-align:left;padding-left:1.2px">Novembro</div><div class="cell" style="left:761.49px;top:111.40px;width:54.89px;height:11.36px;background:#fbf59c;color:#3c4418;text-align:left;padding-left:1.2px">Dezembro</div><div class="cell" style="left:28.50px;top:122.76px;width:129.20px;height:11.36px;background:#c04a0a;color:#ffe2c4;padding-left:1.2px;">Coletas realizadas</div><div class="cell" style="left:157.70px;top:122.76px;width:54.89px;height:11.36px;background:#fd9c6c;color:#4a3428;text-align:right;padding-right:1.5px">987</div><div class="cell" style="left:212.59px;top:122.76px;width:54.89px;height:11.36px;background:#fd9c6c;color:#4a3428;text-align:right;padding-right:1.5px">686</div><div class="cell" style="left:267.48px;top:122.76px;width:54.89px;height:11.36px;background:#fd9c6c;color:#4a3428;text-align:right;padding-right:1.5px">969</div><div class="cell" style="left:322.37px;top:122.76px;width:54.89px;height:11.36px;background:#fd9c6c;color:#4a3428;text-align:right;padding-right:1.5px">1289</div><div class="cell" style="left:377.26px;top:122.76px;width:54.89px;height:11.36px;background:#fd9c6c;color:#4a3428;text-align:right;padding-right:1.5px">899</div><div class="cell" style="left:432.15px;top:122.76px;width:54.89px;height:11.36px;background:#fd9c6c;color:#4a3428;text-align:right;padding-right:1.5px">707</div><div class="cell" style="left:487.04px;top:122.76px;width:54.89px;height:11.36px;background:#fd9c6c;color:#4a3428;text-align:right;padding-right:1.5px">789</div><div class="cell" style="left:541.93px;top:122.76px;width:54.89px;height:11.36px;background:#fd9c6c;color:#4a3428;text-align:right;padding-right:1.5px">966</div><div class="cell" style="left:596.82px;top:122.76px;width:54.89px;height:11.36px;background:#fd9c6c;color:#4a3428;text-align:right;padding-right:1.5px">1011</div><div class="cell" style="left:651.71px;top:122.76px;width:54.89px;height:11.36px;background:#fd9c6c;color:#4a3428;text-align:right;padding-right:1.5px">726</div><div class="cell" style="left:706.60px;top:122.76px;width:54.89px;height:11.36px;background:#fd9c6c;color:#4a3428;text-align:right;padding-right:1.5px">1302</div><div class="cell" style="left:761.49px;top:122.76px;width:54.89px;height:11.36px;background:#fd9c6c;color:#4a3428;text-align:right;padding-right:1.5px">1007</div><div class="cell" style="left:28.50px;top:134.11px;width:129.20px;height:11.36px;background:#c04a0a;color:#ffe2c4;padding-left:1.2px;">Coletas atrasadas</div><div class="cell" style="left:157.70px;top:134.11px;width:54.89px;height:11.36px;background:#fd9c6c;color:#4a3428;text-align:right;padding-right:1.5px">5</div><div class="cell" style="left:212.59px;top:134.11px;width:54.89px;height:11.36px;background:#fd9c6c;color:#4a3428;text-align:right;padding-right:1.5px">8</div><div class="cell" style="left:267.48px;top:134.11px;width:54.89px;height:11.36px;background:#fd9c6c;color:#4a3428;text-align:right;padding-right:1.5px">12</div><div class="cell" style="left:322.37px;top:134.11px;width:54.89px;height:11.36px;background:#fd9c6c;color:#4a3428;text-align:right;padding-right:1.5px">40</div><div class="cell" style="left:377.26px;top:134.11px;width:54.89px;height:11.36px;background:#fd9c6c;color:#4a3428;text-align:right;padding-right:1.5px">32</div><div class="cell" style="left:432.15px;top:134.11px;width:54.89px;height:11.36px;background:#fd9c6c;color:#4a3428;text-align:right;padding-right:1.5px">11</div><div class="cell" style="left:487.04px;top:134.11px;width:54.89px;height:11.36px;background:#fd9c6c;color:#4a3428;text-align:right;padding-right:1.5px">7</div><div class="cell" style="left:541.93px;top:134.11px;width:54.89px;height:11.36px;background:#fd9c6c;color:#4a3428;text-align:right;padding-right:1.5px">22</div><div class="cell" style="left:596.82px;top:134.11px;width:54.89px;height:11.36px;background:#fd9c6c;color:#4a3428;text-align:right;padding-right:1.5px">41</div><div class="cell" style="left:651.71px;top:134.11px;width:54.89px;height:11.36px;background:#fd9c6c;color:#4a3428;text-align:right;padding-right:1.5px">19</div><div class="cell" style="left:706.60px;top:134.11px;width:54.89px;height:11.36px;background:#fd9c6c;color:#4a3428;text-align:right;padding-right:1.5px">26</div><div class="cell" style="left:761.49px;top:134.11px;width:54.89px;height:11.36px;background:#fd9c6c;color:#4a3428;text-align:right;padding-right:1.5px">14</div><div class="cell" style="left:28.50px;top:145.47px;width:129.20px;height:11.36px;background:#e85a3a;color:#ffe0d6;padding-left:1.2px;">% de atrasos nas coletas</div><div class="cell" style="left:157.70px;top:145.47px;width:54.89px;height:11.36px;background:#fdca9e;color:#4a3a30;text-align:right;padding-right:1.5px">0,51</div><div class="cell" style="left:212.59px;top:145.47px;width:54.89px;height:11.36px;background:#fdca9e;color:#4a3a30;text-align:right;padding-right:1.5px">1,17</div><div class="cell" style="left:267.48px;top:145.47px;width:54.89px;height:11.36px;background:#fdca9e;color:#4a3a30;text-align:right;padding-right:1.5px">1,24</div><div class="cell" style="left:322.37px;top:145.47px;width:54.89px;height:11.36px;background:#fdca9e;color:#4a3a30;text-align:right;padding-right:1.5px">3,10</div><div class="cell" style="left:377.26px;top:145.47px;width:54.89px;height:11.36px;background:#fdca9e;color:#4a3a30;text-align:right;padding-right:1.5px">3,56</div><div class="cell" style="left:432.15px;top:145.47px;width:54.89px;height:11.36px;background:#fdca9e;color:#4a3a30;text-align:right;padding-right:1.5px">1,56</div><div class="cell" style="left:487.04px;top:145.47px;width:54.89px;height:11.36px;background:#fdca9e;color:#4a3a30;text-align:right;padding-right:1.5px">0,89</div><div class="cell" style="left:541.93px;top:145.47px;width:54.89px;height:11.36px;background:#fdca9e;color:#4a3a30;text-align:right;padding-right:1.5px">2,28</div><div class="cell" style="left:596.82px;top:145.47px;width:54.89px;height:11.36px;background:#fdca9e;color:#4a3a30;text-align:right;padding-right:1.5px">4,06</div><div class="cell" style="left:651.71px;top:145.47px;width:54.89px;height:11.36px;background:#fdca9e;color:#4a3a30;text-align:right;padding-right:1.5px">2,62</div><div class="cell" style="left:706.60px;top:145.47px;width:54.89px;height:11.36px;background:#fdca9e;color:#4a3a30;text-align:right;padding-right:1.5px">2,00</div><div class="cell" style="left:761.49px;top:145.47px;width:54.89px;height:11.36px;background:#fdca9e;color:#4a3a30;text-align:right;padding-right:1.5px">1,39</div><div class="cell" style="left:28.50px;top:168.18px;width:129.20px;height:11.36px;background:#077a1c;color:#f2fff2;padding-left:1.2px;">Entregas realizadas</div><div class="cell" style="left:157.70px;top:168.18px;width:54.89px;height:11.36px;background:#3ec46c;color:#1d5a2c;text-align:right;padding-right:1.5px">987</div><div class="cell" style="left:212.59px;top:168.18px;width:54.89px;height:11.36px;background:#3ec46c;color:#1d5a2c;text-align:right;padding-right:1.5px">686</div><div class="cell" style="left:267.48px;top:168.18px;width:54.89px;height:11.36px;background:#3ec46c;color:#1d5a2c;text-align:right;padding-right:1.5px">969</div><div class="cell" style="left:322.37px;top:168.18px;width:54.89px;height:11.36px;background:#3ec46c;color:#1d5a2c;text-align:right;padding-right:1.5px">1289</div><div class="cell" style="left:377.26px;top:168.18px;width:54.89px;height:11.36px;background:#3ec46c;color:#1d5a2c;text-align:right;padding-right:1.5px">899</div><div class="cell" style="left:432.15px;top:168.18px;width:54.89px;height:11.36px;background:#3ec46c;color:#1d5a2c;text-align:right;padding-right:1.5px">707</div><div class="cell" style="left:487.04px;top:168.18px;width:54.89px;height:11.36px;background:#3ec46c;color:#1d5a2c;text-align:right;padding-right:1.5px">789</div><div class="cell" style="left:541.93px;top:168.18px;width:54.89px;height:11.36px;background:#3ec46c;color:#1d5a2c;text-align:right;padding-right:1.5px">966</div><div class="cell" style="left:596.82px;top:168.18px;width:54.89px;height:11.36px;background:#3ec46c;color:#1d5a2c;text-align:right;padding-right:1.5px">1011</div><div class="cell" style="left:651.71px;top:168.18px;width:54.89px;height:11.36px;background:#3ec46c;color:#1d5a2c;text-align:right;padding-right:1.5px">726</div><div class="cell" style="left:706.60px;top:168.18px;width:54.89px;height:11.36px;background:#3ec46c;color:#1d5a2c;text-align:right;padding-right:1.5px">1302</div><div class="cell" style="left:761.49px;top:168.18px;width:54.89px;height:11.36px;background:#3ec46c;color:#1d5a2c;text-align:right;padding-right:1.5px">1007</div><div class="cell" style="left:28.50px;top:179.53px;width:129.20px;height:11.36px;background:#077a1c;color:#f2fff2;padding-left:1.2px;">Entregas atrasadas</div><div class="cell" style="left:157.70px;top:179.53px;width:54.89px;height:11.36px;background:#3ec46c;color:#1d5a2c;text-align:right;padding-right:1.5px">12</div><div class="cell" style="left:212.59px;top:179.53px;width:54.89px;height:11.36px;background:#3ec46c;color:#1d5a2c;text-align:right;padding-right:1.5px">3</div><div class="cell" style="left:267.48px;top:179.53px;width:54.89px;height:11.36px;background:#3ec46c;color:#1d5a2c;text-align:right;padding-right:1.5px">16</div><div class="cell" style="left:322.37px;top:179.53px;width:54.89px;height:11.36px;background:#3ec46c;color:#1d5a2c;text-align:right;padding-right:1.5px">56</div><div class="cell" style="left:377.26px;top:179.53px;width:54.89px;height:11.36px;background:#3ec46c;color:#1d5a2c;text-align:right;padding-right:1.5px">80</div><div class="cell" style="left:432.15px;top:179.53px;width:54.89px;height:11.36px;background:#3ec46c;color:#1d5a2c;text-align:right;padding-right:1.5px">11</div><div class="cell" style="left:487.04px;top:179.53px;width:54.89px;height:11.36px;background:#3ec46c;color:#1d5a2c;text-align:right;padding-right:1.5px">9</div><div class="cell" style="left:541.93px;top:179.53px;width:54.89px;height:11.36px;background:#3ec46c;color:#1d5a2c;text-align:right;padding-right:1.5px">24</div><div class="cell" style="left:596.82px;top:179.53px;width:54.89px;height:11.36px;background:#3ec46c;color:#1d5a2c;text-align:right;padding-right:1.5px">73</div><div class="cell" style="left:651.71px;top:179.53px;width:54.89px;height:11.36px;background:#3ec46c;color:#1d5a2c;text-align:right;padding-right:1.5px">35</div><div class="cell" style="left:706.60px;top:179.53px;width:54.89px;height:11.36px;background:#3ec46c;color:#1d5a2c;text-align:right;padding-right:1.5px">29</div><div class="cell" style="left:761.49px;top:179.53px;width:54.89px;height:11.36px;background:#3ec46c;color:#1d5a2c;text-align:right;padding-right:1.5px">15</div><div class="cell" style="left:28.50px;top:190.88px;width:129.20px;height:11.36px;background:#06a11c;color:#f2fff2;padding-left:1.2px;">% de atrasos nas entregas</div><div class="cell" style="left:157.70px;top:190.88px;width:54.89px;height:11.36px;background:#36f436;color:#1d5a1d;text-align:right;padding-right:1.5px">1,22</div><div class="cell" style="left:212.59px;top:190.88px;width:54.89px;height:11.36px;background:#36f436;color:#1d5a1d;text-align:right;padding-right:1.5px">0,44</div><div class="cell" style="left:267.48px;top:190.88px;width:54.89px;height:11.36px;background:#36f436;color:#1d5a1d;text-align:right;padding-right:1.5px">1,65</div><div class="cell" style="left:322.37px;top:190.88px;width:54.89px;height:11.36px;background:#36f436;color:#1d5a1d;text-align:right;padding-right:1.5px">4,34</div><div class="cell" style="left:377.26px;top:190.88px;width:54.89px;height:11.36px;background:#36f436;color:#1d5a1d;text-align:right;padding-right:1.5px">8,90</div><div class="cell" style="left:432.15px;top:190.88px;width:54.89px;height:11.36px;background:#36f436;color:#1d5a1d;text-align:right;padding-right:1.5px">1,56</div><div class="cell" style="left:487.04px;top:190.88px;width:54.89px;height:11.36px;background:#36f436;color:#1d5a1d;text-align:right;padding-right:1.5px">1,14</div><div class="cell" style="left:541.93px;top:190.88px;width:54.89px;height:11.36px;background:#36f436;color:#1d5a1d;text-align:right;padding-right:1.5px">2,48</div><div class="cell" style="left:596.82px;top:190.88px;width:54.89px;height:11.36px;background:#36f436;color:#1d5a1d;text-align:right;padding-right:1.5px">7,22</div><div class="cell" style="left:651.71px;top:190.88px;width:54.89px;height:11.36px;background:#36f436;color:#1d5a1d;text-align:right;padding-right:1.5px">4,82</div><div class="cell" style="left:706.60px;top:190.88px;width:54.89px;height:11.36px;background:#36f436;color:#1d5a1d;text-align:right;padding-right:1.5px">2,23</div><div class="cell" style="left:761.49px;top:190.88px;width:54.89px;height:11.36px;background:#36f436;color:#1d5a1d;text-align:right;padding-right:1.5px">1,49</div>
<div class="a" style="left:28.00px;top:110.80px;width:788.88px;height:1.2px;background:#262626"></div><div class="a" style="left:28.00px;top:122.16px;width:788.88px;height:1.2px;background:#262626"></div><div class="a" style="left:28.00px;top:133.51px;width:788.88px;height:1.2px;background:#262626"></div><div class="a" style="left:28.00px;top:144.87px;width:788.88px;height:1.2px;background:#262626"></div><div class="a" style="left:28.00px;top:156.22px;width:788.88px;height:1.2px;background:#262626"></div><div class="a" style="left:27.90px;top:110.90px;width:1.2px;height:46.42px;background:#262626"></div><div class="a" style="left:157.10px;top:110.90px;width:1.2px;height:46.42px;background:#262626"></div><div class="a" style="left:211.99px;top:110.90px;width:1.2px;height:46.42px;background:#262626"></div><div class="a" style="left:266.88px;top:110.90px;width:1.2px;height:46.42px;background:#262626"></div><div class="a" style="left:321.77px;top:110.90px;width:1.2px;height:46.42px;background:#262626"></div><div class="a" style="left:376.66px;top:110.90px;width:1.2px;height:46.42px;background:#262626"></div><div class="a" style="left:431.55px;top:110.90px;width:1.2px;height:46.42px;background:#262626"></div><div class="a" style="left:486.44px;top:110.90px;width:1.2px;height:46.42px;background:#262626"></div><div class="a" style="left:541.33px;top:110.90px;width:1.2px;height:46.42px;background:#262626"></div><div class="a" style="left:596.22px;top:110.90px;width:1.2px;height:46.42px;background:#262626"></div><div class="a" style="left:651.11px;top:110.90px;width:1.2px;height:46.42px;background:#262626"></div><div class="a" style="left:706.00px;top:110.90px;width:1.2px;height:46.42px;background:#262626"></div><div class="a" style="left:760.89px;top:110.90px;width:1.2px;height:46.42px;background:#262626"></div><div class="a" style="left:815.78px;top:110.90px;width:1.2px;height:46.42px;background:#262626"></div><div class="a" style="left:28.00px;top:167.58px;width:788.88px;height:1.2px;background:#262626"></div><div class="a" style="left:28.00px;top:178.93px;width:788.88px;height:1.2px;background:#262626"></div><div class="a" style="left:28.00px;top:190.28px;width:788.88px;height:1.2px;background:#262626"></div><div class="a" style="left:28.00px;top:201.64px;width:788.88px;height:1.2px;background:#262626"></div><div class="a" style="left:27.90px;top:167.68px;width:1.2px;height:35.06px;background:#262626"></div><div class="a" style="left:157.10px;top:167.68px;width:1.2px;height:35.06px;background:#262626"></div><div class="a" style="left:211.99px;top:167.68px;width:1.2px;height:35.06px;background:#262626"></div><div class="a" style="left:266.88px;top:167.68px;width:1.2px;height:35.06px;background:#262626"></div><div class="a" style="left:321.77px;top:167.68px;width:1.2px;height:35.06px;background:#262626"></div><div class="a" style="left:376.66px;top:167.68px;width:1.2px;height:35.06px;background:#262626"></div><div class="a" style="left:431.55px;top:167.68px;width:1.2px;height:35.06px;background:#262626"></div><div class="a" style="left:486.44px;top:167.68px;width:1.2px;height:35.06px;background:#262626"></div><div class="a" style="left:541.33px;top:167.68px;width:1.2px;height:35.06px;background:#262626"></div><div class="a" style="left:596.22px;top:167.68px;width:1.2px;height:35.06px;background:#262626"></div><div class="a" style="left:651.11px;top:167.68px;width:1.2px;height:35.06px;background:#262626"></div><div class="a" style="left:706.00px;top:167.68px;width:1.2px;height:35.06px;background:#262626"></div><div class="a" style="left:760.89px;top:167.68px;width:1.2px;height:35.06px;background:#262626"></div><div class="a" style="left:815.78px;top:167.68px;width:1.2px;height:35.06px;background:#262626"></div>
<div class="a" style="left:760.99px;top:156.32px;width:55.89px;height:12.36px;border:2px solid #333"></div>
<div class="a" style="left:814.88px;top:166.68px;width:4px;height:4px;background:#333"></div>
<div class="a" style="left:157.20px;top:212.90px;width:604.70px;height:262.10px;background:#fff;border:1.6px solid #4a4a4a"></div><svg class="a" style="left:0;top:0" width="880" height="512" shape-rendering="geometricPrecision"><path d="M224.8,243.5 L614.5,243.5 L614.5,424.0 L224.8,424.0 Z" fill="#fff" stroke="#b4b4b4" stroke-width="1"/><path d="M211.0,430.2 L224.8,424.0 L614.5,424.0" fill="none" stroke="#a8a8a8" stroke-width="1"/><text x="204.5" y="433.2" text-anchor="end" font-family="Liberation Sans" font-size="8.3" fill="#333">0,00</text><path d="M211.0,404.5 L224.8,398.2 L614.5,398.2" fill="none" stroke="#a8a8a8" stroke-width="1"/><text x="204.5" y="407.5" text-anchor="end" font-family="Liberation Sans" font-size="8.3" fill="#333">2,00</text><path d="M211.0,378.8 L224.8,372.4 L614.5,372.4" fill="none" stroke="#a8a8a8" stroke-width="1"/><text x="204.5" y="381.8" text-anchor="end" font-family="Liberation Sans" font-size="8.3" fill="#333">4,00</text><path d="M211.0,353.1 L224.8,346.6 L614.5,346.6" fill="none" stroke="#a8a8a8" stroke-width="1"/><text x="204.5" y="356.1" text-anchor="end" font-family="Liberation Sans" font-size="8.3" fill="#333">6,00</text><path d="M211.0,327.3 L224.8,320.8 L614.5,320.8" fill="none" stroke="#a8a8a8" stroke-width="1"/><text x="204.5" y="330.3" text-anchor="end" font-family="Liberation Sans" font-size="8.3" fill="#333">8,00</text><path d="M211.0,301.6 L224.8,295.1 L614.5,295.1" fill="none" stroke="#a8a8a8" stroke-width="1"/><text x="204.5" y="304.6" text-anchor="end" font-family="Liberation Sans" font-size="8.3" fill="#333">10,00</text><path d="M211.0,275.9 L224.8,269.3 L614.5,269.3" fill="none" stroke="#a8a8a8" stroke-width="1"/><text x="204.5" y="278.9" text-anchor="end" font-family="Liberation Sans" font-size="8.3" fill="#333">12,00</text><path d="M211.0,250.2 L224.8,243.5 L614.5,243.5" fill="none" stroke="#a8a8a8" stroke-width="1"/><text x="204.5" y="253.2" text-anchor="end" font-family="Liberation Sans" font-size="8.3" fill="#333">14,00</text><path d="M211.0,250.2 L211.0,430.2" stroke="#a8a8a8" stroke-width="1"/><path d="M224.8,243.5 L224.8,424.0" stroke="#a8a8a8" stroke-width="1"/><path d="M211.0,430.2 L224.8,424.0 L614.5,424.0 L601.6,430.2 Z" fill="#8c8c8c"/><path d="M223.00,429.1 L223.00,406.78 L229.80,402.98 L245.40,402.98 L245.40,425.30 L238.60,429.1 Z" fill="#222b04"/><path d="M238.30,429.1 L245.40,425.30 L245.40,418.72 L238.30,422.52 Z" fill="#b99a18"/><path d="M223.00,406.78 L229.80,402.98 L245.40,402.98 L238.60,406.78 Z" fill="#2a3405"/><rect x="223.00" y="422.52" width="15.6" height="6.58" fill="#fdd421"/><rect x="223.00" y="406.78" width="15.6" height="15.74" fill="#34410a"/><text x="227.8" y="455.2" text-anchor="middle" font-family="Liberation Sans" font-size="8.35" fill="#333">Janeiro</text><path d="M255.45,429.1 L255.45,408.33 L262.25,404.53 L277.85,404.53 L277.85,425.30 L271.05,429.1 Z" fill="#222b04"/><path d="M270.75,429.1 L277.85,425.30 L277.85,410.21 L270.75,414.01 Z" fill="#b99a18"/><path d="M255.45,408.33 L262.25,404.53 L277.85,404.53 L271.05,408.33 Z" fill="#2a3405"/><rect x="255.45" y="414.01" width="15.6" height="15.09" fill="#fdd421"/><rect x="255.45" y="408.33" width="15.6" height="5.68" fill="#34410a"/><text x="260.2" y="445" text-anchor="middle" font-family="Liberation Sans" font-size="8.35" fill="#333">Fevereiro</text><path d="M287.90,429.1 L287.90,391.82 L294.70,388.02 L310.30,388.02 L310.30,425.30 L303.50,429.1 Z" fill="#222b04"/><path d="M303.20,429.1 L310.30,425.30 L310.30,409.30 L303.20,413.10 Z" fill="#b99a18"/><path d="M287.90,391.82 L294.70,388.02 L310.30,388.02 L303.50,391.82 Z" fill="#2a3405"/><rect x="287.90" y="413.10" width="15.6" height="16.00" fill="#fdd421"/><rect x="287.90" y="391.82" width="15.6" height="21.29" fill="#34410a"/><text x="292.7" y="455.2" text-anchor="middle" font-family="Liberation Sans" font-size="8.35" fill="#333">Março</text><path d="M320.35,429.1 L320.35,333.12 L327.15,329.32 L342.75,329.32 L342.75,425.30 L335.95,429.1 Z" fill="#222b04"/><path d="M335.65,429.1 L342.75,425.30 L342.75,385.31 L335.65,389.11 Z" fill="#b99a18"/><path d="M320.35,333.12 L327.15,329.32 L342.75,329.32 L335.95,333.12 Z" fill="#2a3405"/><rect x="320.35" y="389.11" width="15.6" height="39.99" fill="#fdd421"/><rect x="320.35" y="333.12" width="15.6" height="55.99" fill="#34410a"/><text x="325.2" y="445" text-anchor="middle" font-family="Liberation Sans" font-size="8.35" fill="#333">Abril</text><path d="M352.80,429.1 L352.80,268.37 L359.60,264.57 L375.20,264.57 L375.20,425.30 L368.40,429.1 Z" fill="#222b04"/><path d="M368.10,429.1 L375.20,425.30 L375.20,379.38 L368.10,383.18 Z" fill="#b99a18"/><path d="M352.80,268.37 L359.60,264.57 L375.20,264.57 L368.40,268.37 Z" fill="#2a3405"/><rect x="352.80" y="383.18" width="15.6" height="45.92" fill="#fdd421"/><rect x="352.80" y="268.37" width="15.6" height="114.81" fill="#34410a"/><text x="357.6" y="455.2" text-anchor="middle" font-family="Liberation Sans" font-size="8.35" fill="#333">Maio</text><path d="M385.25,429.1 L385.25,388.85 L392.05,385.05 L407.65,385.05 L407.65,425.30 L400.85,429.1 Z" fill="#222b04"/><path d="M400.55,429.1 L407.65,425.30 L407.65,405.18 L400.55,408.98 Z" fill="#b99a18"/><path d="M385.25,388.85 L392.05,385.05 L407.65,385.05 L400.85,388.85 Z" fill="#2a3405"/><rect x="385.25" y="408.98" width="15.6" height="20.12" fill="#fdd421"/><rect x="385.25" y="388.85" width="15.6" height="20.12" fill="#34410a"/><text x="390.1" y="445" text-anchor="middle" font-family="Liberation Sans" font-size="8.35" fill="#333">Junho</text><path d="M417.70,429.1 L417.70,402.91 L424.50,399.11 L440.10,399.11 L440.10,425.30 L433.30,429.1 Z" fill="#222b04"/><path d="M433.00,429.1 L440.10,425.30 L440.10,413.82 L433.00,417.62 Z" fill="#b99a18"/><path d="M417.70,402.91 L424.50,399.11 L440.10,399.11 L433.30,402.91 Z" fill="#2a3405"/><rect x="417.70" y="417.62" width="15.6" height="11.48" fill="#fdd421"/><rect x="417.70" y="402.91" width="15.6" height="14.71" fill="#34410a"/><text x="422.5" y="455.2" text-anchor="middle" font-family="Liberation Sans" font-size="8.35" fill="#333">Julho</text><path d="M450.15,429.1 L450.15,367.70 L456.95,363.90 L472.55,363.90 L472.55,425.30 L465.75,429.1 Z" fill="#222b04"/><path d="M465.45,429.1 L472.55,425.30 L472.55,395.89 L465.45,399.69 Z" fill="#b99a18"/><path d="M450.15,367.70 L456.95,363.90 L472.55,363.90 L465.75,367.70 Z" fill="#2a3405"/><rect x="450.15" y="399.69" width="15.6" height="29.41" fill="#fdd421"/><rect x="450.15" y="367.70" width="15.6" height="31.99" fill="#34410a"/><text x="455.0" y="445" text-anchor="middle" font-family="Liberation Sans" font-size="8.35" fill="#333">Agosto</text><path d="M482.60,429.1 L482.60,283.59 L489.40,279.79 L505.00,279.79 L505.00,425.30 L498.20,429.1 Z" fill="#222b04"/><path d="M497.90,429.1 L505.00,425.30 L505.00,372.93 L497.90,376.73 Z" fill="#b99a18"/><path d="M482.60,283.59 L489.40,279.79 L505.00,279.79 L498.20,283.59 Z" fill="#2a3405"/><rect x="482.60" y="376.73" width="15.6" height="52.37" fill="#fdd421"/><rect x="482.60" y="283.59" width="15.6" height="93.14" fill="#34410a"/><text x="487.4" y="455.2" text-anchor="middle" font-family="Liberation Sans" font-size="8.35" fill="#333">Setembro</text><path d="M515.05,429.1 L515.05,333.12 L521.85,329.32 L537.45,329.32 L537.45,425.30 L530.65,429.1 Z" fill="#222b04"/><path d="M530.35,429.1 L537.45,425.30 L537.45,391.50 L530.35,395.30 Z" fill="#b99a18"/><path d="M515.05,333.12 L521.85,329.32 L537.45,329.32 L530.65,333.12 Z" fill="#2a3405"/><rect x="515.05" y="395.30" width="15.6" height="33.80" fill="#fdd421"/><rect x="515.05" y="333.12" width="15.6" height="62.18" fill="#34410a"/><text x="519.8" y="445" text-anchor="middle" font-family="Liberation Sans" font-size="8.35" fill="#333">Outubro</text><path d="M547.50,429.1 L547.50,374.53 L554.30,370.73 L569.90,370.73 L569.90,425.30 L563.10,429.1 Z" fill="#222b04"/><path d="M562.80,429.1 L569.90,425.30 L569.90,399.50 L562.80,403.30 Z" fill="#b99a18"/><path d="M547.50,374.53 L554.30,370.73 L569.90,370.73 L563.10,374.53 Z" fill="#2a3405"/><rect x="547.50" y="403.30" width="15.6" height="25.80" fill="#fdd421"/><rect x="547.50" y="374.53" width="15.6" height="28.77" fill="#34410a"/><text x="552.3" y="455.2" text-anchor="middle" font-family="Liberation Sans" font-size="8.35" fill="#333">Novembro</text><path d="M579.95,429.1 L579.95,391.95 L586.75,388.15 L602.35,388.15 L602.35,425.30 L595.55,429.1 Z" fill="#222b04"/><path d="M595.25,429.1 L602.35,425.30 L602.35,407.37 L595.25,411.17 Z" fill="#b99a18"/><path d="M579.95,391.95 L586.75,388.15 L602.35,388.15 L595.55,391.95 Z" fill="#2a3405"/><rect x="579.95" y="411.17" width="15.6" height="17.93" fill="#fdd421"/><rect x="579.95" y="391.95" width="15.6" height="19.22" fill="#34410a"/><text x="584.8" y="445" text-anchor="middle" font-family="Liberation Sans" font-size="8.35" fill="#333">Dezembro</text><rect x="642" y="340.3" width="5" height="4.6" fill="#313d07"/><rect x="642" y="351.8" width="5" height="4.6" fill="#fdd421"/><text x="650" y="345.5" font-family="Liberation Sans" font-size="8.3" fill="#333">% de atrasos nas entregas</text><text x="650" y="357" font-family="Liberation Sans" font-size="8.3" fill="#333">% de atrasos nas coletas</text></svg>
<div class="a" style="left:869.8px;top:97px;width:1px;height:389px;background:#6a6a6a"></div>
<div class="a" style="left:870px;top:97px;width:10px;height:390px;background:#e9e8e6"></div>
<div class="a" style="left:870px;top:97.5px;width:9px;height:2.5px;background:#111"></div>
<div class="a" style="left:871px;top:108px;width:7.5px;height:370px;border-radius:4px;background:linear-gradient(90deg,#fdfdfd,#e2e2e0);border:1px solid #c9c8c5"></div>
<div class="dd" style="left:872.5px;top:104px;border-top:0;border-bottom:2.5px solid #444"></div>
<div class="dd" style="left:872.5px;top:481px;border-top:2.5px solid #444"></div>
<div class="a" style="left:0;top:486.5px;width:880px;height:10.5px;background:#e9e8e6"></div>
<div class="a" style="left:2.3px;top:488.8px;width:6.2px;height:6.8px;background:linear-gradient(#f2f2f1,#dcdcda);border:0.8px solid #c9c9c7"></div>
<div class="a" style="left:10.8px;top:488.8px;width:7.4px;height:6.8px;background:linear-gradient(#f2f2f1,#dcdcda);border:0.8px solid #c9c9c7"></div>
<div class="a" style="left:19.9px;top:488.8px;width:6.2px;height:6.8px;background:linear-gradient(#f2f2f1,#dcdcda);border:0.8px solid #c9c9c7"></div>
<div class="a" style="left:28.4px;top:488.8px;width:6.3px;height:6.8px;background:linear-gradient(#f2f2f1,#dcdcda);border:0.8px solid #c9c9c7"></div>
<svg class="a" style="left:0;top:486px" width="40" height="11"><path d="M4.3 6.2 l1.4 -1.2 v2.4 z M5.8 6.2 l1.4 -1.2 v2.4 z M13.5 6.2 l1.6 -1.3 v2.6 z M22.6 6.2 l-1.6 -1.3 v2.6 z M30.5 6.2 l-1.4 -1.2 v2.4 z M32.2 6.2 l-1.4 -1.2 v2.4 z" fill="#777"/></svg>
<svg class="a" style="left:0;top:486px" width="200" height="11"><path d="M35 1.5 H178" stroke="#333" stroke-width="1"/><path d="M69.3 1.5 L66.5 10 H97.5 L100.5 1.5" fill="#d2d2d0" stroke="#444" stroke-width="0.8"/><path d="M100.5 1.5 L97.5 10 H123.5 L126.5 1.5" fill="#d2d2d0" stroke="#444" stroke-width="0.8"/><path d="M126.5 1.5 L123.5 10 H140.5 L143.5 1.5" fill="#e4e4e2" stroke="#444" stroke-width="0.8"/><path d="M37 1.5 L42 10 H67 L69.3 1.5" fill="#fff" stroke="#333" stroke-width="0.9"/><path d="M131 5.5 h6 M134 3 v5" stroke="#4a9a1a" stroke-width="2.2"/><path d="M177.5 1.5 V10 H181 V1.5" fill="#fff" stroke="#222" stroke-width="1.2"/><path d="M188.5 5.5 L186.3 4 V7 Z" fill="#555"/></svg>
<div class="t" style="left:42.8px;top:489px;font-size:7.4px;font-weight:bold;color:#222">Folha1</div>
<div class="t" style="left:70.8px;top:488.8px;font-size:8px;color:#555">Folha2</div>
<div class="t" style="left:99.5px;top:488.8px;font-size:8px;color:#555">Folha3</div>
<div class="a" style="left:189.5px;top:487.6px;width:678px;height:8.8px;background:#dddcda;border-radius:4px"></div>
<div class="a" style="left:189.5px;top:487.6px;width:312px;height:8.8px;border-radius:4.4px;background:linear-gradient(#fcfcfc,#e0e0de);border:0.8px solid #c8c7c4"></div>
<svg class="a" style="left:855px;top:486px" width="20" height="11"><path d="M8.5 5.5 L6 4 V7 Z" fill="#333"/></svg>
<div class="a" style="left:867.5px;top:487px;width:2.2px;height:9.5px;background:#111"></div>
<div class="a" style="left:0;top:497px;width:880px;height:15px;background:#efeeed;border-top:1px solid #dcdbd8"></div>
<div class="t" style="left:7px;top:501.5px;font-size:8.2px;color:#3c3c3c">Folha 1 / 3</div>
<div class="a" style="left:177px;top:499px;width:1px;height:12px;background:#d6d5d2"></div>
<div class="t" style="left:181px;top:501.5px;font-size:8.5px;color:#3c3c3c">Predefinição</div>
<div class="a" style="left:361px;top:499px;width:1px;height:12px;background:#d6d5d2"></div>
<div class="t" style="left:403.6px;top:501.5px;font-size:8.5px;color:#333;-webkit-text-stroke:0.2px #333">PAD</div>
<div class="a" style="left:397px;top:499px;width:1px;height:12px;background:#d6d5d2"></div>
<div class="a" style="left:428px;top:499px;width:1px;height:12px;background:#d6d5d2"></div>
<div class="a" style="left:436px;top:501px;width:6px;height:8px;background:#eef2fa;border:0.8px solid #9ab"></div>
<div class="a" style="left:434.5px;top:500.5px;width:2px;height:5.5px;background:#d0204a"></div><div class="a" style="left:434.5px;top:507px;width:2px;height:2px;background:#d0204a"></div>
<div class="a" style="left:449.7px;top:499px;width:1px;height:12px;background:#d6d5d2"></div>
<div class="a" style="left:469px;top:499px;width:1px;height:12px;background:#d6d5d2"></div>
<div class="t" style="left:592.5px;top:501.5px;font-size:8.5px;color:#3c3c3c">Soma=0</div>
<div class="a" style="left:746px;top:499px;width:1px;height:12px;background:#d6d5d2"></div>
<div class="a" style="left:750px;top:500.5px;width:8.5px;height:8.5px;border-radius:50%;border:1px solid #5b7da0;background:#eef3f8"></div>
<div class="a" style="left:752px;top:504.3px;width:4.5px;height:1px;background:#3b5d80"></div>
<div class="a" style="left:762px;top:504.5px;width:71px;height:1.2px;background:#a9a8a5"></div>
<div class="a" style="left:793px;top:501.5px;width:5.5px;height:6.5px;border-radius:2px;background:#6a7f96"></div>
<div class="a" style="left:836px;top:500.5px;width:8.5px;height:8.5px;border-radius:50%;border:1px solid #5b7da0;background:#eef3f8"></div>
<div class="a" style="left:838px;top:504.3px;width:4.5px;height:1px;background:#3b5d80"></div>
<div class="a" style="left:839.8px;top:502.5px;width:1px;height:4.5px;background:#3b5d80"></div>
<div class="a" style="left:847px;top:499px;width:1px;height:12px;background:#d6d5d2"></div>
<div class="t" style="left:851px;top:501.5px;font-size:8.5px;color:#333">100%</div>
</body></html>
